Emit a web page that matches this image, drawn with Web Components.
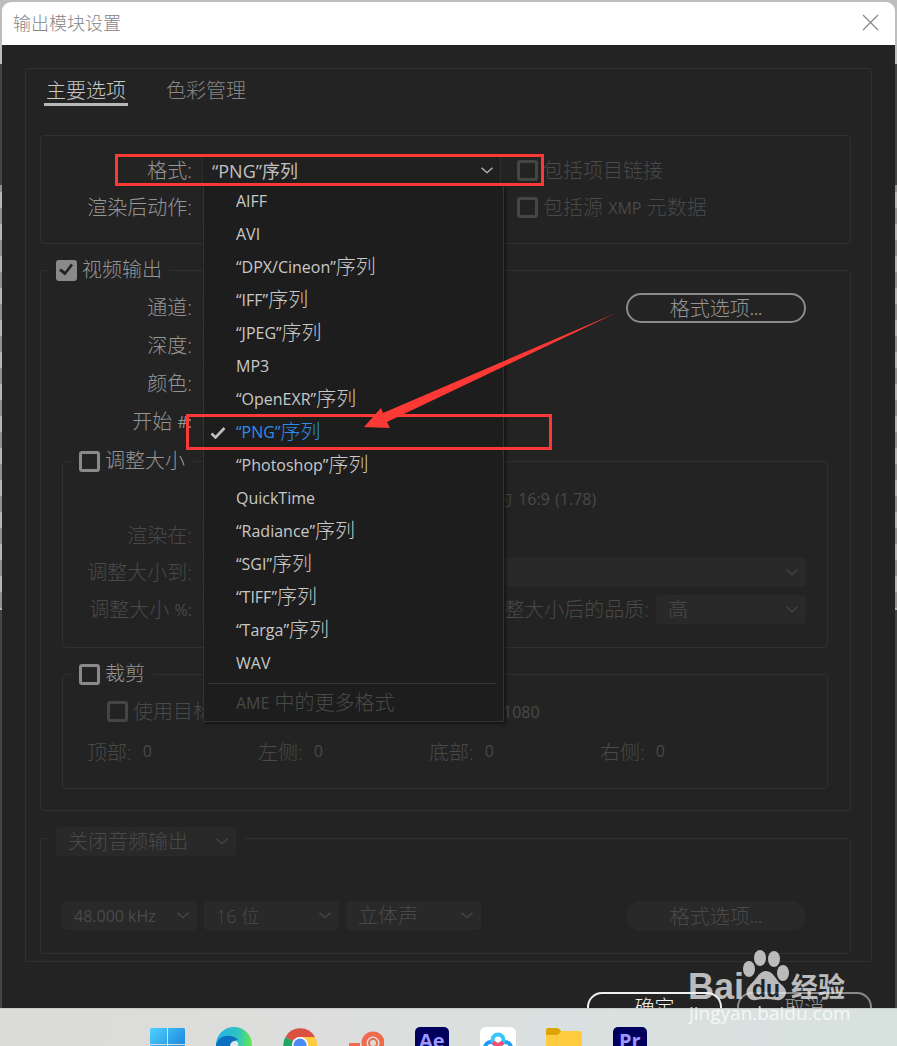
<!DOCTYPE html>
<html lang="zh-CN">
<head>
<meta charset="utf-8">
<title>输出模块设置</title>
<style>
    html, body {
        height: 100%;
        margin: 0;
        overflow: hidden;
    }
    body {
        font-family: "Open Sans", "Noto Sans CJK SC", sans-serif;
        font-size: 20px;
        font-weight: 300;
        --text: #959595;
        --dim: #494949;
        --line: #303030;
        --cjk: "Noto Sans CJK SC", sans-serif;
    }
</style>
</head>
<body>
<app-desktop>
    <app-dialog heading="输出模块设置">
        <tab-panel>
            <group-box class="first" style="--label: 151px">
                <form-row>
                    <select-field class="fixed open" label="格式:" value="“PNG”序列" size="18">
                        <format-menu></format-menu>
                    </select-field>
                    <check-field label="包括项目链接" disabled></check-field>
                </form-row>
                <form-row>
                    <select-field class="fixed" label="渲染后动作:"></select-field>
                    <check-field label="包括源 XMP 元数据" disabled></check-field>
                </form-row>
            </group-box>

            <group-box class="video" style="--label: 151px">
                <check-field slot="legend" label="视频输出" checked></check-field>
                <form-row class="tall wide">
                    <select-field class="fixed" label="通道:"></select-field>
                    <pill-button>格式选项...</pill-button>
                </form-row>
                <form-row class="tall"><select-field class="fixed" label="深度:"></select-field></form-row>
                <form-row class="tall"><select-field class="fixed" label="颜色:"></select-field></form-row>
                <form-row class="tall"><select-field class="fixed" label="开始 #:"></select-field></form-row>

                <group-box class="inner" style="--label: 129px">
                    <check-field slot="legend" label="调整大小"></check-field>
                    <form-row class="ratio"><mixed-text>为 16:9 (1.78)</mixed-text></form-row>
                    <form-row><select-field class="fixed" label="渲染在:" disabled></select-field></form-row>
                    <form-row class="inset"><select-field class="grow" label="调整大小到:" disabled></select-field></form-row>
                    <form-row class="inset wide">
                        <select-field class="short" label="调整大小 %:" disabled></select-field>
                        <select-field class="quality" label="调整大小后的品质:" value="高" disabled></select-field>
                    </form-row>
                </group-box>

                <group-box class="inner crop">
                    <check-field slot="legend" label="裁剪"></check-field>
                    <form-row class="target">
                        <check-field label="使用目标" disabled></check-field>
                        <mixed-text>1080</mixed-text>
                    </form-row>
                    <form-row class="edges">
                        <number-field label="顶部:" value="0"></number-field>
                        <number-field label="左侧:" value="0"></number-field>
                        <number-field label="底部:" value="0"></number-field>
                        <number-field label="右侧:" value="0"></number-field>
                    </form-row>
                </group-box>
            </group-box>

            <group-box class="audio">
                <select-field slot="legend" class="plain" style="--w: 180px" name="音频输出" value="关闭音频输出" disabled></select-field>
                <form-row class="wide">
                    <select-field class="plain" name="采样率" value="48.000 kHz" size="16" disabled></select-field>
                    <select-field class="plain" name="位深度" value="16 位" size="18" disabled></select-field>
                    <select-field class="plain" name="声道" value="立体声" disabled></select-field>
                    <pill-button disabled>格式选项...</pill-button>
                </form-row>
            </group-box>
        </tab-panel>
        <pill-button slot="footer" class="primary">确定</pill-button>
        <pill-button slot="footer">取消</pill-button>
    </app-dialog>
    <task-bar></task-bar>
    <red-marks></red-marks>
    <water-mark></water-mark>
</app-desktop>

<script>
// wraps the latin runs, they are set smaller than the chinese ones
const mix = text => text.replace(/[^\u3400-\u9fff\s]+/g, run => run === ':' ? run : `<span class="latin">${run}</span>`);

const mixStyle = `
    .mix { font-family: "Open Sans", var(--cjk); font-size: 20px; white-space: pre; }
    .latin { font: 400 16px "Open Sans", sans-serif; vertical-align: 1px; }
`;

const chevron = `
    <svg class="chevron" width="12" height="7" viewBox="0 0 12 7" aria-hidden="true">
        <path d="M.5 .8 6 5.6 11.5 .8" fill="none" stroke="currentColor" stroke-width="1.2"/>
    </svg>
`;

class BaseElement extends HTMLElement {
    constructor() {
        super();
        this.shadow = this.attachShadow({ mode: 'open' });
    }

    connectedCallback() {
        this.shadow.innerHTML = this.render();
    }

    flag(name) {
        return this.hasAttribute(name) ? name : '';
    }

    attr(name) {
        return this.getAttribute(name) || '';
    }
}

class AppDesktop extends BaseElement {
    render() {
        return `
            <style>
                :host {
                    display: flex;
                    flex-direction: column;
                    position: relative;
                    height: 100vh;
                    overflow: hidden;
                    background:
                        linear-gradient(#bdbdbd 0 64px, #444 64px 185px, transparent 185px 610px, #454545 610px),
                        repeating-linear-gradient(#b9b5b3 0 16px, #938f8c 16px 32px);
                }
            </style>
            <slot></slot>
        `;
    }
}

class AppDialog extends BaseElement {
    render() {
        return `
            <style>
                :host {
                    display: flex;
                    flex: 1;
                    flex-direction: column;
                    min-height: 0;
                    overflow: hidden;
                    padding: 2px 2px 0;
                }
                header {
                    display: flex;
                    flex: none;
                    align-items: center;
                    justify-content: space-between;
                    height: 43px;
                    padding: 0 16px 3px 11px;
                    box-sizing: border-box;
                    border-radius: 9px 9px 0 0;
                    background: #fff;
                    color: #858585;
                }
                h1 {
                    margin: 0;
                    font: 300 18px/24px var(--cjk);
                }
                header button {
                    display: flex;
                    padding: 0;
                    border: 0;
                    background: none;
                    color: #8a8a8a;
                }
                .body {
                    flex: 1 0 auto;
                    padding: 23px 23px 0;
                    background: #232323;
                }
                footer {
                    display: flex;
                    justify-content: flex-end;
                    gap: 15px;
                    padding-top: 30px;
                    --w: 135px;
                }
            </style>
            <header>
                <h1>${this.attr('heading')}</h1>
                <button aria-label="关闭">
                    <svg width="17" height="17" viewBox="0 0 17 17"><path d="M1 1 16 16M16 1 1 16" stroke="currentColor" stroke-width="1.3"/></svg>
                </button>
            </header>
            <div class="body">
                <slot></slot>
                <footer><slot name="footer"></slot></footer>
            </div>
        `;
    }
}

class TabPanel extends BaseElement {
    render() {
        return `
            <style>
                :host {
                    display: block;
                    padding: 8px 20px 7px 14px;
                    border: 1px solid var(--line);
                    border-radius: 3px;
                }
                nav {
                    display: flex;
                    gap: 36px;
                    padding-left: 4px;
                    margin-bottom: 29px;
                }
                button {
                    height: 29px;
                    padding: 0 2px;
                    border: 0;
                    border-bottom: 3px solid transparent;
                    background: none;
                    color: #858585;
                    font: 300 20px/26px var(--cjk);
                }
                button[aria-selected=true] {
                    border-color: #b8b8b8;
                    color: #c8c8c8;
                }
            </style>
            <nav role="tablist">
                <button role="tab" aria-selected="true">主要选项</button>
                <button role="tab" aria-selected="false">色彩管理</button>
            </nav>
            <slot></slot>
        `;
    }
}

class GroupBox extends BaseElement {
    render() {
        const legend = this.querySelector(':scope > [slot=legend]') ? '<legend><slot name="legend"></slot></legend>' : '';
        return `
            <style>
                :host { display: block; }
                :host(.video) { margin: 15px 0 16px; }
                :host(.inner) { margin: 9px 22px 0 21px; }
                :host(.crop) { margin-top: 15px; }
                fieldset {
                    min-width: 0;
                    margin: 0;
                    padding: 0 0 16px;
                    border: 1px solid var(--line);
                    border-radius: 4px;
                }
                legend {
                    height: 22px;
                    margin-left: 8px;
                    padding: 0 8px 0 7px;
                }
                .content { padding-top: 8px; }
                :host(.first) .content { padding: 16px 0 1px; }
                :host(.video) fieldset { padding-bottom: 21px; }
                :host(.inner) legend { padding-left: 8px; }
                :host(.inner) fieldset { padding-bottom: 19px; }
                :host(.crop) fieldset { padding-bottom: 16px; }
                :host(.audio) .content { padding: 48px 0 3px 21px; }
            </style>
            <fieldset>
                ${legend}
                <div class="content"><slot></slot></div>
            </fieldset>
        `;
    }
}

class FormRow extends BaseElement {
    render() {
        return `
            <style>
                :host {
                    display: flex;
                    align-items: center;
                    gap: 16px;
                    height: 37px;
                }
                :host(.tall) { height: 38px; }
                :host(.wide) { padding-right: 44px; gap: 7px; }
                :host(.inset) { padding-right: 21px; }
                :host(.ratio) { padding-left: 430px; }
                :host(.target) {
                    display: grid;
                    grid-template-columns: 380px auto;
                    padding-left: 44px;
                }
                :host(.edges) {
                    display: grid;
                    grid-template-columns: repeat(4, 171px);
                    gap: 0;
                    height: 42px;
                    padding-left: 24px;
                }
                ::slotted(pill-button), ::slotted(.quality) { margin-left: auto; }
            </style>
            <slot></slot>
        `;
    }
}

class MixedText extends BaseElement {
    render() {
        return `
            <style>
                :host { display: block; color: var(--dim); line-height: 26px; }
                ${mixStyle}
            </style>
            <span class="mix">${mix(this.textContent)}</span>
        `;
    }
}

class CheckField extends BaseElement {
    render() {
        return `
            <style>
                :host { display: block; color: var(--text); }
                :host([disabled]) { color: var(--dim); }
                label {
                    display: flex;
                    align-items: center;
                    gap: 5px;
                    height: 22px;
                    line-height: 22px;
                }
                input {
                    appearance: none;
                    flex: none;
                    width: 21px;
                    height: 21px;
                    margin: 0;
                    border: 3px solid currentColor;
                    border-radius: 3px;
                    color: #8a8a8a;
                }
                input:disabled { color: #454545; }
                input:checked { background: currentColor; }
                input:checked::before {
                    content: "";
                    display: block;
                    width: 15px;
                    height: 15px;
                    background: #232323;
                    clip-path: polygon(0 8px, 2px 6px, 6px 9px, 12px 1px, 14px 3px, 6px 13px);
                }
                ${mixStyle}
            </style>
            <label><input type="checkbox" ${this.flag('checked')} ${this.flag('disabled')}><span class="mix">${mix(this.attr('label'))}</span></label>
        `;
    }
}

class SelectField extends BaseElement {
    render() {
        const label = this.attr('label');
        const value = this.attr('value');
        return `
            <style>
                :host {
                    display: flex;
                    align-items: center;
                    gap: 10px;
                    position: relative;
                    color: var(--text);
                }
                :host([disabled]) { color: var(--dim); }
                :host(.grow) { flex: 1; }
                label {
                    flex: none;
                    width: var(--label);
                    text-align: right;
                    line-height: 26px;
                }
                :host(.quality) { gap: 7px; }
                :host(.quality) label { width: auto; }
                .box {
                    display: grid;
                    align-items: center;
                    width: var(--w, 135px);
                }
                :host(.fixed) .box { width: 299px; }
                :host(.grow) .box { flex: 1; }
                :host(.quality) .box { width: 150px; }
                select, .chevron { grid-area: 1 / 1; }
                select {
                    appearance: none;
                    width: 100%;
                    height: 29px;
                    padding: 0 24px 0 12px;
                    border: 0;
                    border-radius: 4px;
                    background: #292929;
                    color: inherit;
                    opacity: 1;
                    font: 300 20px "Open Sans", var(--cjk);
                }
                select[data-size="18"] { font-size: 18px; }
                select[data-size="16"] { font-size: 16px; font-weight: 400; }
                .chevron { justify-self: end; margin-right: 8px; pointer-events: none; }
                :host(.open) .box { color: #c0c0c0; }
                :host(.open) select {
                    padding-left: 9px;
                    border: 1px solid #2e2e2e;
                    border-width: 0 1px;
                    border-radius: 0;
                    background: #202020;
                    font-weight: 400;
                }
                ${mixStyle}
            </style>
            ${label && `<label for="s"><span class="mix">${mix(label)}</span></label>`}
            <div class="box">
                <select id="s" data-size="${this.attr('size')}" aria-label="${label || this.attr('name')}" ${this.flag('disabled')}>
                    ${value && `<option>${value}</option>`}
                </select>
                ${chevron}
            </div>
            <slot></slot>
        `;
    }
}

class NumberField extends BaseElement {
    render() {
        return `
            <style>
                :host {
                    display: flex;
                    align-items: center;
                    gap: 11px;
                    color: var(--dim);
                }
                input {
                    width: 60px;
                    padding: 0;
                    border: 0;
                    background: none;
                    color: inherit;
                    font: 400 16px/26px "Open Sans", sans-serif;
                }
                ${mixStyle}
            </style>
            <label for="n"><span class="mix">${mix(this.attr('label'))}</span></label>
            <input id="n" value="${this.attr('value')}" disabled>
        `;
    }
}

class PillButton extends BaseElement {
    render() {
        return `
            <style>
                :host { display: block; }
                button {
                    display: block;
                    width: var(--w, 180px);
                    height: 30px;
                    padding: 0;
                    border: 2px solid #8a8a8a;
                    border-radius: 15px;
                    background: none;
                    color: var(--text);
                    font: 300 20px/26px var(--cjk);
                }
                :host(.primary) button { border-color: #f0f0f0; color: #f0f0f0; }
                button:disabled { border-color: #292929; background: #292929; color: var(--dim); }
                ${mixStyle}
            </style>
            <button ${this.flag('disabled')}><span class="mix">${mix(this.textContent)}</span></button>
        `;
    }
}

class FormatMenu extends BaseElement {
    render() {
        const formats = ['AIFF', 'AVI', '“DPX/Cineon”序列', '“IFF”序列', '“JPEG”序列', 'MP3', '“OpenEXR”序列', '“PNG”序列',
            '“Photoshop”序列', 'QuickTime', '“Radiance”序列', '“SGI”序列', '“TIFF”序列', '“Targa”序列', 'WAV'];
        const items = formats.map(name => `
            <li role="option" aria-selected="${name === '“PNG”序列'}">
                <svg width="16" height="14" viewBox="0 0 16 14" aria-hidden="true"><path d="M1.5 8.5 5.5 12.500 14.5 3" fill="none" stroke="#c0c0c0" stroke-width="2.6"/></svg>
                <span class="mix">${mix(name)}</span>
            </li>
        `).join('');
        return `
            <style>
                :host {
                    position: absolute;
                    z-index: 2;
                    top: 100%;
                    right: -3px;
                    width: 301px;
                    margin-top: 1px;
                }
                ul {
                    margin: 0;
                    padding: 0;
                    border: 1px solid #333;
                    border-top: 0;
                    background: #1d1d1d;
                    box-shadow: 2px 2px 3px #151515;
                    color: #c8c8c8;
                    list-style: none;
                }
                li {
                    display: flex;
                    align-items: center;
                    gap: 10px;
                    height: 33px;
                    padding: 0 0 3px 6px;
                    box-sizing: border-box;
                    line-height: 26px;
                }
                li svg { visibility: hidden; }
                li[aria-selected=true] { color: #2d8ceb; }
                li[aria-selected=true] svg { visibility: visible; }
                hr {
                    margin: 2px 7px 0 4px;
                    border: 0;
                    border-top: 1px solid #333;
                }
                .more { height: 37px; padding-bottom: 0; color: var(--dim); }
                ${mixStyle}
            </style>
            <ul role="listbox" aria-label="格式">
                ${items}
                <hr>
                <li class="more" role="option" aria-disabled="true"><svg width="16" height="14"></svg><span class="mix">${mix('AME 中的更多格式')}</span></li>
            </ul>
        `;
    }
}

class TaskBar extends BaseElement {
    render() {
        return `
            <style>
                :host {
                    display: flex;
                    flex: none;
                    gap: 30px;
                    height: 38px;
                    padding: 18px 0 0 150px;
                    box-sizing: border-box;
                    overflow: hidden;
                    border-top: 1px solid #c9caca;
                    background: linear-gradient(90deg, #dbdbd9, #dddddc 30%, #dae0df 60%, #d7e2df);
                }
                svg { flex: none; width: 36px; height: 36px; }
                text { font: 700 20px "Open Sans", sans-serif; fill: #9d97ff; }
            </style>
            <svg viewBox="0 0 36 36">
                <defs><linearGradient id="win" x2="1" y2="1"><stop stop-color="#50d0ff"/><stop offset="1" stop-color="#0a70d0"/></linearGradient></defs>
                <path d="M1 1h16v16H0V2zM18 1h16l1 1v15H18zM0 18h17v17H0zM18 18h17v17H18z" fill="url(#win)"/>
            </svg>
            <svg viewBox="0 0 36 36">
                <defs><linearGradient id="edge"><stop stop-color="#27b2e8"/><stop offset=".6" stop-color="#2dc3c4"/><stop offset="1" stop-color="#67e84a"/></linearGradient></defs>
                <circle cx="18" cy="18" r="18" fill="url(#edge)"/>
                <path d="M0 18C2 8 16 6 22 13c-6 0-8 5-7 11 1 5 5 9 9 11C10 39 0 29 0 18z" fill="#0c70c0"/>
                <path d="M14 20c0-4 2-6 5-6s4 3 3 7z" fill="#e2e8e8"/>
            </svg>
            <svg viewBox="0 0 36 36">
                <path d="M18 18 3.400 10A17 17 0 0 1 33 10z" fill="#dc4f43"/>
                <path d="M18 18 3.400 10A17 17 0 0 0 16 35z" fill="#22a565"/>
                <path d="M18 10h15A17 17 0 0 1 16 35z" fill="#fdcc40"/>
                <circle cx="18" cy="18" r="8" fill="#fff"/>
                <circle cx="18" cy="18" r="6.500" fill="#4c8bf5"/>
            </svg>
            <svg viewBox="0 0 36 36" fill="none" stroke="#f06a4e">
                <path d="M1 19h11" stroke-width="6"/>
                <circle cx="25" cy="16" r="9" stroke-width="5"/>
                <circle cx="25" cy="16" r="4" stroke-width="2"/>
            </svg>
            <svg viewBox="0 0 36 36"><rect x="1" width="34" height="34" rx="5" fill="#01005c"/><text x="5" y="21">Ae</text></svg>
            <svg viewBox="0 0 36 36">
                <rect width="36" height="36" rx="6" fill="#fff"/>
                <g fill="none" stroke-width="4"><circle cx="11" cy="21" r="6" stroke="#1c9cf5"/><circle cx="25" cy="21" r="6" stroke="#1c9cf5"/><circle cx="18" cy="13" r="5.500" stroke="#38c5fb"/><path d="M13 15a6 6 0 0 0 10 0" stroke="#f94e70"/></g>
            </svg>
            <svg viewBox="0 0 36 36">
                <path d="M0 3q0-2 2-2h9q2 0 4 3v6H0z" fill="#dfa205"/>
                <path d="M0 8h10q3 0 5-4h19q2 0 2 2v25H0z" fill="#fecc3e"/>
            </svg>
            <svg viewBox="0 0 36 36"><rect x="1" width="34" height="34" rx="5" fill="#01005c"/><text x="7" y="21">Pr</text></svg>
        `;
    }
}

class RedMarks extends BaseElement {
    render() {
        return `
            <style>
                :host {
                    position: absolute;
                    z-index: 3;
                    inset: 0;
                    pointer-events: none;
                }
            </style>
            <svg width="620" height="460" aria-hidden="true">
                <g fill="none" stroke="#fd3935" stroke-width="3">
                    <rect x="116.500" y="155.500" width="426" height="29"/>
                    <rect x="187.500" y="415.500" width="363" height="33"/>
                </g>
                <path d="M364 427 381 408 383 413 616 313 387 422 390 428z" fill="#fd3935"/>
            </svg>
        `;
    }
}

class WaterMark extends BaseElement {
    render() {
        return `
            <style>
                :host {
                    position: absolute;
                    z-index: 4;
                    right: 43px;
                    bottom: 18px;
                    opacity: .75;
                }
                svg { display: block; }
                text { font-family: "Liberation Sans", sans-serif; font-weight: 700; }
            </style>
            <svg width="166" height="80" viewBox="0 0 166 80" fill="#eee">
                <text x="0" y="51" font-size="36">Bai</text>
                <ellipse cx="61" cy="21" rx="6" ry="8"/>
                <ellipse cx="72" cy="10" rx="6" ry="8"/>
                <ellipse cx="86" cy="11" rx="6" ry="8"/>
                <ellipse cx="95" cy="25" rx="6" ry="8"/>
                <path d="M78 23q5 0 9 6 3 5 8 9 5 5 2 10-3 5-9 4-10-2-20 0-7 1-9-5-2-5 3-10 4-4 7-8 4-6 9-6z"/>
                <text x="64" y="49" font-size="23" fill="#222">du</text>
                <text x="103" y="49" font-size="27" style="font-family: 'Noto Sans CJK SC', sans-serif">经验</text>
                <text x="1" y="72" font-size="19" fill="#fff" style="font-family: 'Open Sans', sans-serif; font-weight: 400">jingyan.baidu.com</text>
            </svg>
        `;
    }
}

customElements.define('app-desktop', AppDesktop);
customElements.define('app-dialog', AppDialog);
customElements.define('tab-panel', TabPanel);
customElements.define('group-box', GroupBox);
customElements.define('form-row', FormRow);
customElements.define('mixed-text', MixedText);
customElements.define('check-field', CheckField);
customElements.define('select-field', SelectField);
customElements.define('number-field', NumberField);
customElements.define('pill-button', PillButton);
customElements.define('format-menu', FormatMenu);
customElements.define('task-bar', TaskBar);
customElements.define('red-marks', RedMarks);
customElements.define('water-mark', WaterMark);
</script>
</body>
</html>
